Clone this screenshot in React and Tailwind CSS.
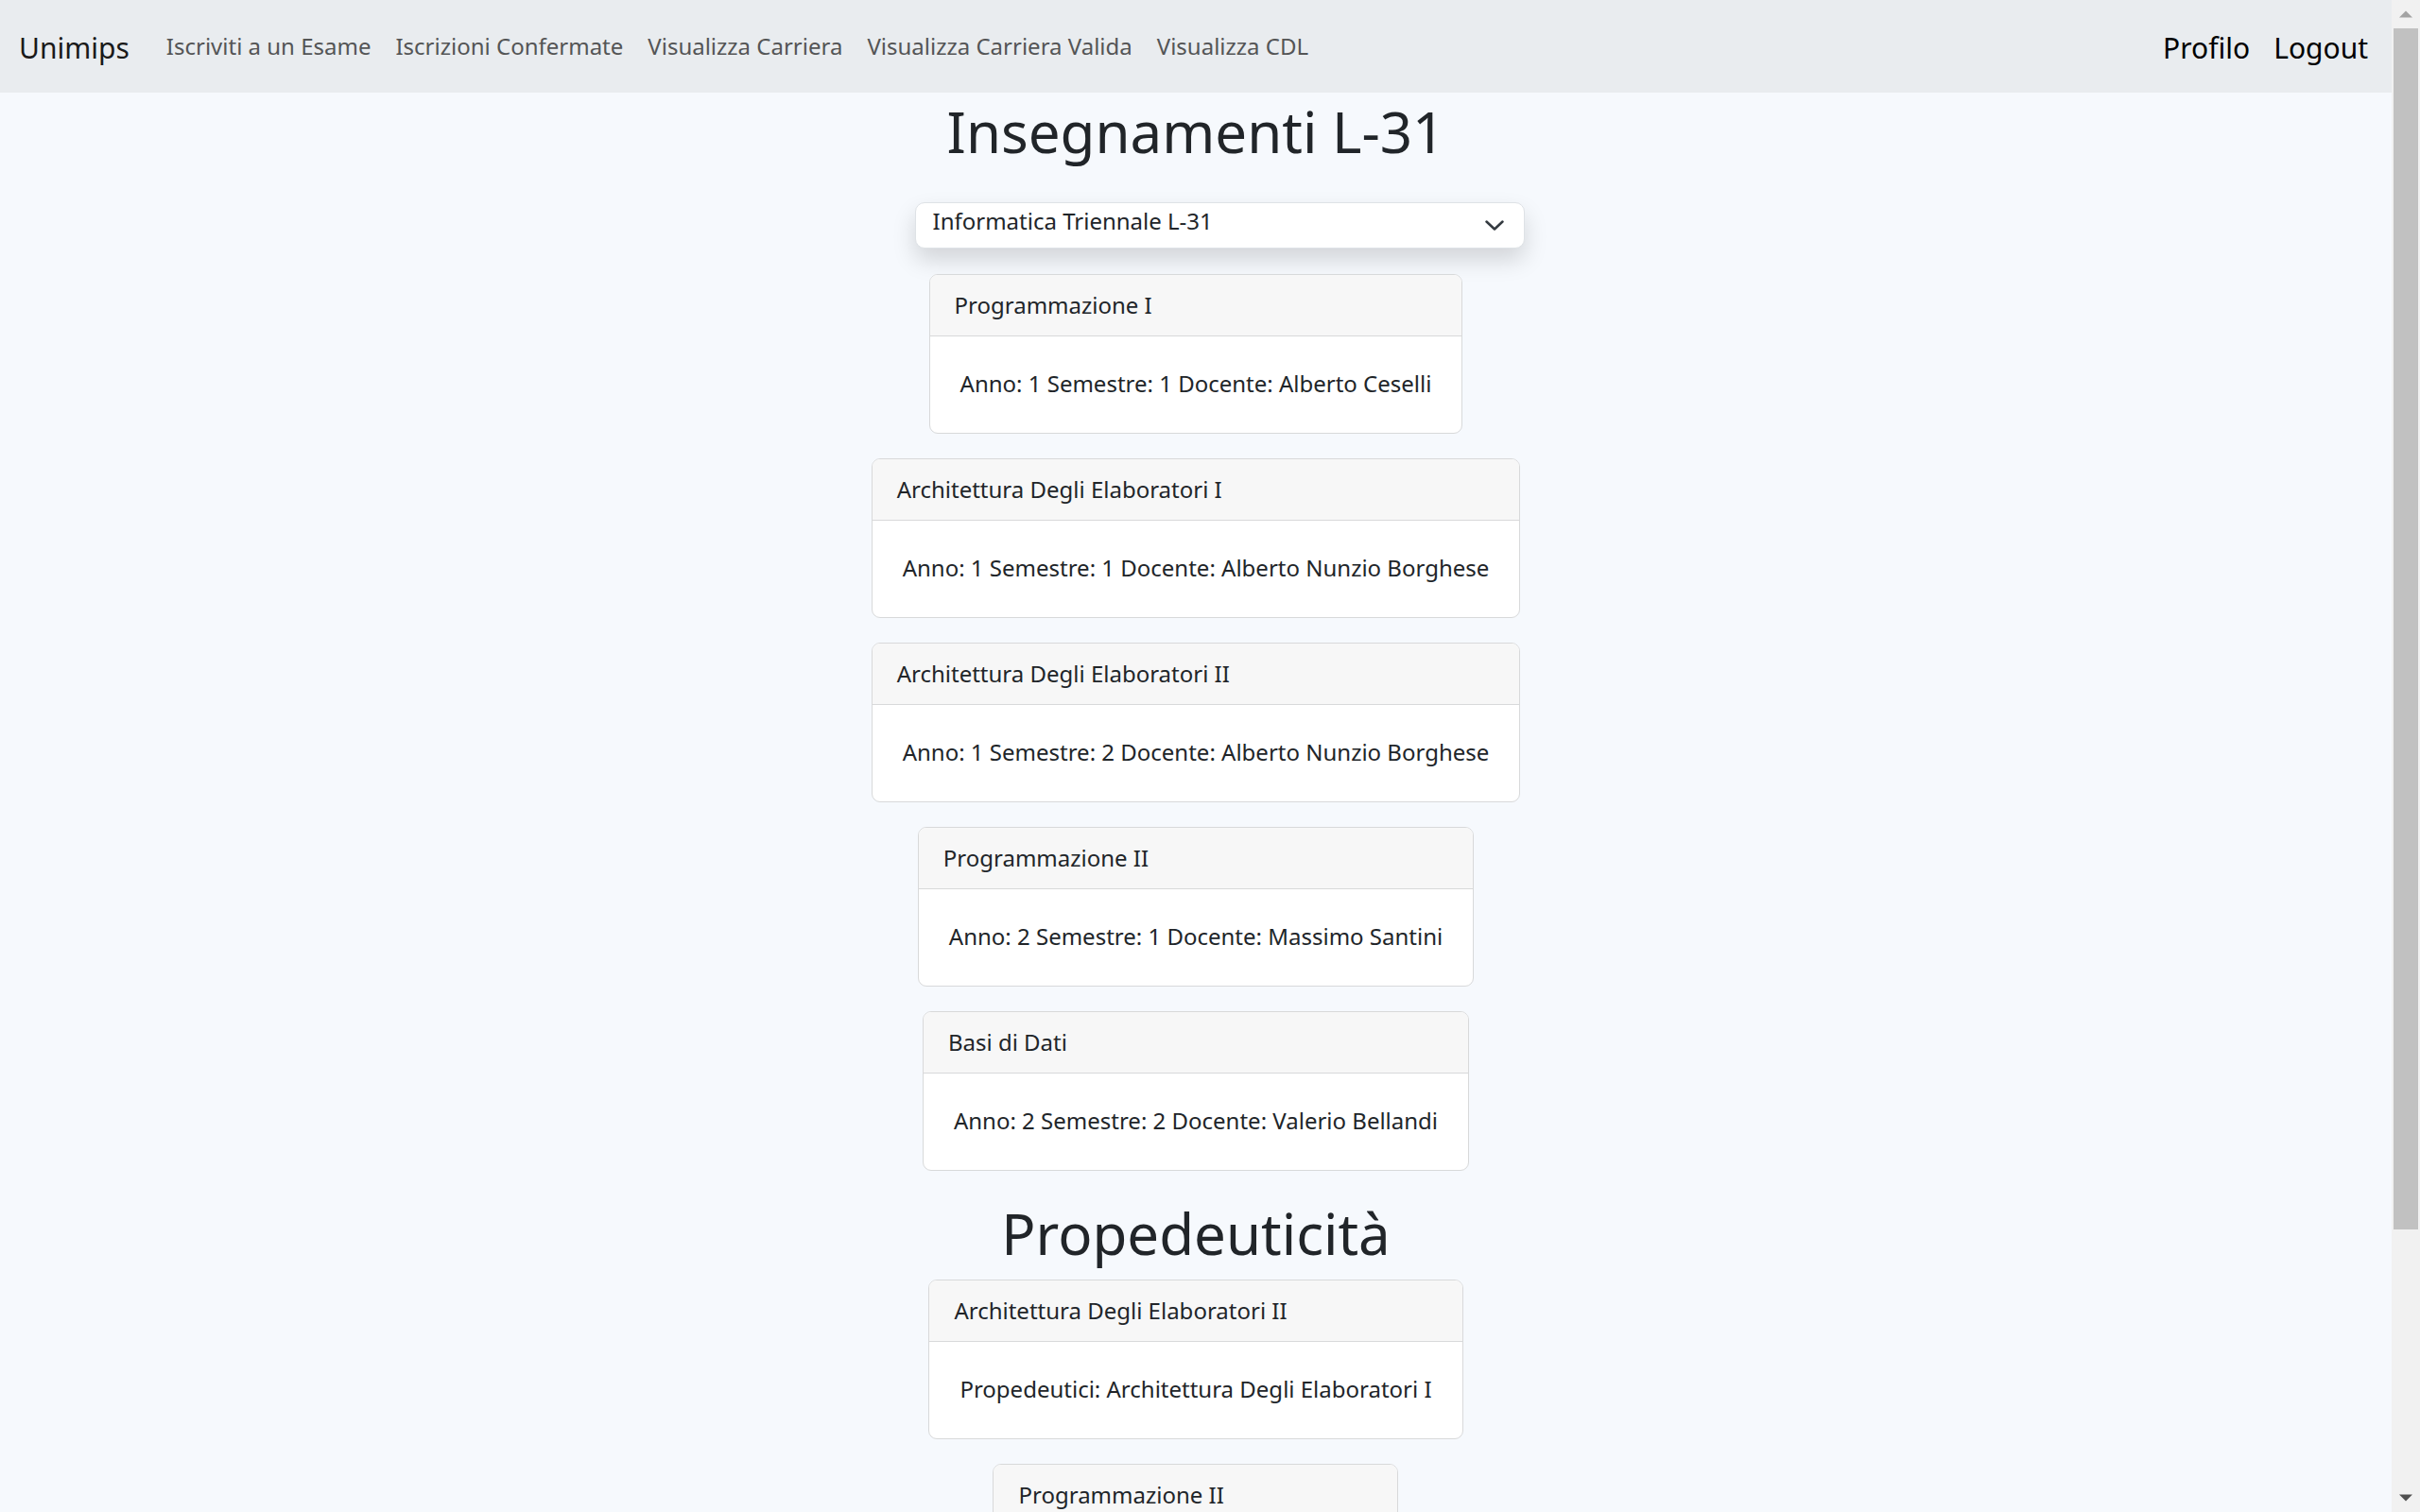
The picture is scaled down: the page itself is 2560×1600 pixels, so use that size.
const insegnamenti = [
  { nome: "Programmazione I", info: "Anno: 1 Semestre: 1 Docente: Alberto Ceselli" },
  { nome: "Architettura Degli Elaboratori I", info: "Anno: 1 Semestre: 1 Docente: Alberto Nunzio Borghese" },
  { nome: "Architettura Degli Elaboratori II", info: "Anno: 1 Semestre: 2 Docente: Alberto Nunzio Borghese" },
  { nome: "Programmazione II", info: "Anno: 2 Semestre: 1 Docente: Massimo Santini" },
  { nome: "Basi di Dati", info: "Anno: 2 Semestre: 2 Docente: Valerio Bellandi" },
];

const propedeuticita = [
  { nome: "Architettura Degli Elaboratori II", info: "Propedeutici: Architettura Degli Elaboratori I" },
  { nome: "Programmazione II", info: "Propedeutici: Programmazione I", width: "w-[429px]" },
];

const links = [
  "Iscriviti a un Esame",
  "Iscrizioni Confermate",
  "Visualizza Carriera",
  "Visualizza Carriera Valida",
  "Visualizza CDL",
];

function Card({ nome, info, width = "" }) {
  return (
    <div className={`flex flex-col bg-white border border-[#d8d9da] rounded-[9px] overflow-hidden ${width}`}>
      <div className="bg-[#f7f7f7] border-b border-[#d8d9da] px-[26px] pt-[14px] pb-[14px] leading-[36px]">
        {nome}
      </div>
      <div className="px-[32px] pt-[32px] pb-[34px] leading-[36px] text-center">{info}</div>
    </div>
  );
}

function Navbar() {
  return (
    <nav className="h-[98px] shrink-0 bg-[#e9ecef] flex items-center justify-between pl-[20px] pr-[25px]">
      <div className="flex items-center">
        <a className="text-[30px] leading-[45px] mt-[3px] text-[#1a1a1a] mr-[26px]">Unimips</a>
        {links.map((l) => (
          <a key={l} className="px-[13px] text-[24px] leading-[36px] text-[#545556]">
            {l}
          </a>
        ))}
      </div>
      <div className="flex items-center gap-[25px] text-[30px] leading-[45px] mt-[3px] text-black">
        <a>Profilo</a>
        <a>Logout</a>
      </div>
    </nav>
  );
}

function Scrollbar() {
  return (
    <div className="w-[30px] shrink-0 h-full bg-[#f1f1f1] flex flex-col items-center">
      <div className="h-[30px] w-full flex items-center justify-center">
        <svg width="14" height="8" viewBox="0 0 14 8">
          <path d="M0 7.5 L7 0.5 L14 7.5 Z" fill="#a3a3a3" />
        </svg>
      </div>
      <div className="w-[26px] h-[1271px] bg-[#c1c1c1]" />
      <div className="flex-1" />
      <div className="h-[30px] w-full flex items-center justify-center">
        <svg width="14" height="8" viewBox="0 0 14 8">
          <path d="M0 0.5 L7 7.5 L14 0.5 Z" fill="#505050" />
        </svg>
      </div>
    </div>
  );
}

export default function App() {
  return (
    <div className="h-screen w-full flex overflow-hidden bg-[#f6f9fd] text-[#212529] font-['Noto_Sans',sans-serif] text-[24px]">
      <div className="flex-1 flex flex-col overflow-hidden">
        <Navbar />
        <main className="flex flex-col items-center">
          <h1 className="mt-[5px] text-[60px] leading-[72px] font-normal">Insegnamenti L-31</h1>

          <div className="w-full flex justify-center mt-[39px]">
            <div className="ml-[50px] w-[645px] h-[49px] bg-white border border-[#dee2e6] rounded-[10px] shadow-[0_12px_24px_rgba(0,0,0,0.15)] flex items-center justify-between pl-[18px] pr-[21px]">
              <span className="self-start pt-[1px] leading-[36px]">Informatica Triennale L-31</span>
              <svg width="20" height="11" viewBox="0 0 20 11" fill="none">
                <path d="M1.5 1.5 L10 9.5 L18.5 1.5" stroke="#343a40" strokeWidth="2.5" strokeLinecap="round" strokeLinejoin="round" />
              </svg>
            </div>
          </div>

          <div className="mt-[27px] flex flex-col items-center gap-[26px]">
            {insegnamenti.map((c, i) => (
              <Card key={i} {...c} />
            ))}
          </div>

          <h1 className="mt-[30px] text-[60px] leading-[72px] font-normal">Propedeuticità</h1>

          <div className="mt-[13px] flex flex-col items-center gap-[26px]">
            {propedeuticita.map((c, i) => (
              <Card key={i} {...c} />
            ))}
          </div>
        </main>
      </div>
      <Scrollbar />
    </div>
  );
}
